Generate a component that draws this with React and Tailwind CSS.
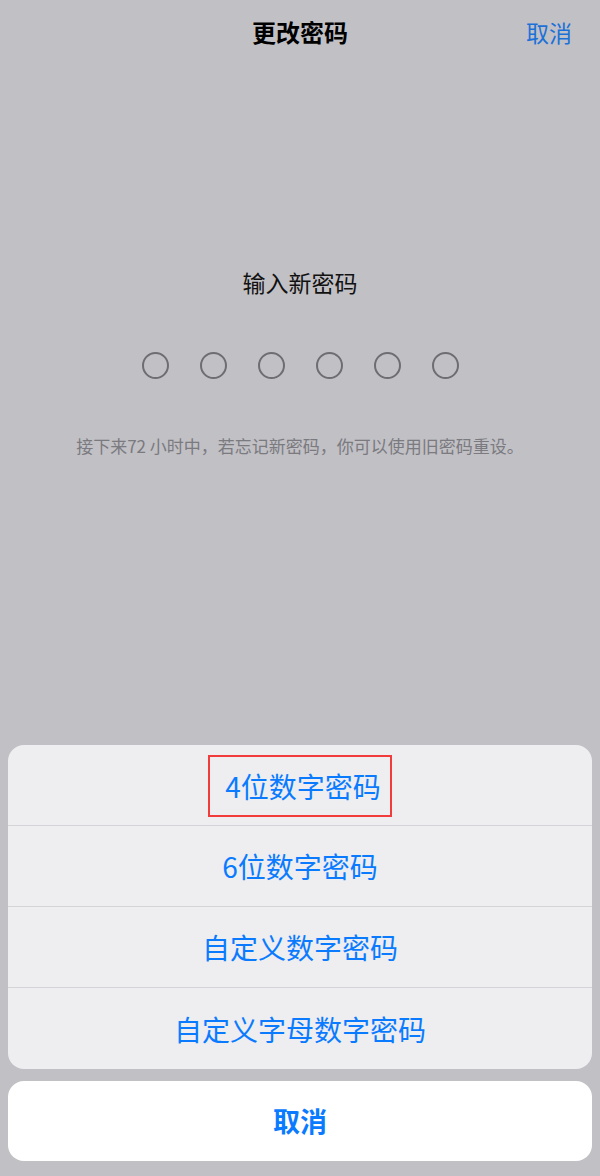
import React from "react";

const FONT = { fontFamily: '"Noto Sans CJK SC", "Noto Sans", sans-serif' };

const options = ["4位数字密码", "6位数字密码", "自定义数字密码", "自定义字母数字密码"];

export default function App() {
  return (
    <div
      className="w-[600px] h-[1176px] bg-[#c1c0c5] flex flex-col overflow-hidden"
      style={FONT}
    >
      {/* nav bar */}
      <div className="h-[64px] grid grid-cols-3 items-center pl-7 pr-[28px]">
        <div />
        <div className="text-center text-[24px] font-bold text-black leading-none whitespace-nowrap">
          更改密码
        </div>
        <div className="text-right text-[23px] text-[#1b71d8] leading-none">取消</div>
      </div>

      {/* passcode entry */}
      <div className="flex flex-col items-center">
        <div className="mt-[203px] text-[23px] text-[#111] leading-[30px]">输入新密码</div>
        <div className="mt-[55px] flex gap-[31px]">
          {[0, 1, 2, 3, 4, 5].map((i) => (
            <div
              key={i}
              className="w-[27px] h-[27px] rounded-full border-2 border-[#6d6d72]"
            />
          ))}
        </div>
        <div className="mt-[55px] text-[17px] text-[#7a7a7f] leading-[24px] whitespace-nowrap">
          接下来72 小时中，若忘记新密码，你可以使用旧密码重设。
        </div>
      </div>

      <div className="flex-1" />

      {/* action sheet */}
      <div className="px-2 pb-[15px] flex flex-col gap-3">
        <div className="bg-[#eeeef1] rounded-[16px] overflow-hidden flex flex-col divide-y divide-[#d4d4d8]">
          {options.map((label, i) => (
            <div key={label} className="h-[81px] flex items-center justify-center">
              <span
                className={
                  i === 0
                    ? "border-2 border-[#f23b3b] pl-[15px] pr-[9px] h-[62px] mt-[2px] flex items-center text-[28px] text-[#0a7bff]"
                    : "text-[28px] text-[#0a7bff]"
                }
              >
                {label}
              </span>
            </div>
          ))}
        </div>
        <div className="h-[80px] bg-white rounded-[16px] flex items-center justify-center text-[27px] font-bold text-[#0a7bff]">
          取消
        </div>
      </div>
    </div>
  );
}
